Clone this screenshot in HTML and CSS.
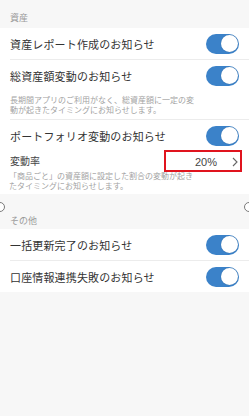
FILE: index.html
```html
<!DOCTYPE html>
<html lang="ja">
<head>
<meta charset="utf-8">
<link rel="stylesheet" href="styles.css">
</head>
<body>
<div class="page">
  <div class="section-head first">資産</div>
  <div class="group">
    <div class="item">
      <div class="row"><span class="title">資産レポート作成のお知らせ</span><span class="toggle"></span></div>
    </div>
    <div class="item">
      <div class="row"><span class="title">総資産額変動のお知らせ</span><span class="toggle"></span></div>
      <p class="desc">長期間アプリのご利用がなく、総資産額に一定の変<br>動が起きたタイミングにお知らせします。</p>
    </div>
    <div class="item last">
      <div class="row"><span class="title">ポートフォリオ変動のお知らせ</span><span class="toggle"></span></div>
      <div class="subrow">
        <span class="subtitle">変動率</span>
        <span class="value">20%<svg class="chev" width="6" height="10" viewBox="0 0 6 10"><path d="M1 1l4 4-4 4" fill="none" stroke="#666" stroke-width="1.1"/></svg></span>
      </div>
      <p class="desc tight">「商品ごと」の資産額に設定した割合の変動が起き<br>たタイミングにお知らせします。</p>
    </div>
  </div>
  <div class="section-head second">その他</div>
  <div class="group">
    <div class="item">
      <div class="row"><span class="title">一括更新完了のお知らせ</span><span class="toggle"></span></div>
    </div>
    <div class="item last">
      <div class="row"><span class="title">口座情報連携失敗のお知らせ</span><span class="toggle"></span></div>
    </div>
  </div>
  <span class="handle left"></span>
  <span class="handle right"></span>
</div>
</body>
</html>
```

FILE: styles.css
```css
* { box-sizing: border-box; }
html, body {
  margin: 0;
  padding: 0;
  background: #f7f7f7;
}
body {
  font-family: "Noto Sans CJK JP", "Noto Sans", sans-serif;
  color: #333;
}
.page {
  position: relative;
  width: 249px;
  height: 416px;
  overflow: hidden;
}
.section-head {
  font-size: 9px;
  line-height: 11px;
  color: #9a9a9a;
  padding: 0 10px 3px;
}
.section-head.first { padding-top: 12px; padding-bottom: 5px; }
.section-head.second { padding-top: 21px; }
.group {
  background: #fff;
}
.item {
  margin-left: 10px;
  padding-right: 10px;
  border-bottom: 1px solid #ececec;
}
.item.last { border-bottom: none; }
.row {
  height: 31px;
  display: flex;
  align-items: center;
  justify-content: space-between;
}
.title {
  font-size: 11px;
  letter-spacing: 0.15px;
  line-height: 14px;
  color: #333;
}
.toggle {
  position: relative;
  width: 33px;
  height: 20px;
  border-radius: 10px;
  background: #3b82c9;
  flex: none;
}
.toggle::after {
  content: "";
  position: absolute;
  right: 1.5px;
  top: 1.5px;
  width: 17px;
  height: 17px;
  border-radius: 50%;
  background: #fff;
  box-shadow: 0 0 1px rgba(0,0,0,.25);
}
.desc {
  margin: 4px 0 0;
  padding-bottom: 4px;
  font-size: 8px;
  line-height: 10px;
  color: #a3a3a3;
  white-space: nowrap;
}
.desc.tight {
  margin-top: 0;
  padding-bottom: 3px;
  margin-left: -1px;
}
.subrow {
  height: 20px;
  display: flex;
  align-items: center;
  justify-content: space-between;
}
.subtitle {
  font-size: 10px;
  line-height: 12px;
  color: #444;
}
.value {
  position: relative;
  display: flex;
  align-items: center;
  gap: 15px;
  font-family: "Liberation Sans", Arial, sans-serif;
  font-size: 11px;
  color: #444;
  margin-top: 2px;
  padding-right: 1px;
}
.value::after {
  content: "";
  position: absolute;
  left: -31px;
  right: -3px;
  top: -6px;
  bottom: -4px;
  border: 2px solid #e0141e;
}
.chev { display: block; }
.handle {
  position: absolute;
  top: 202px;
  width: 10px;
  height: 10px;
  border-radius: 50%;
  border: 1.5px solid #7a7a7a;
  background: #fff;
}
.handle.left { left: -5px; }
.handle.right { right: -5px; }
```
